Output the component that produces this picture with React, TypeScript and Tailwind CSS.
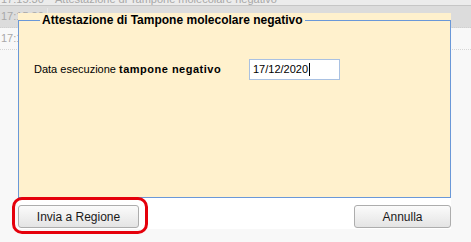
const rows = [
    { time: "17:15:30", text: "Attestazione di Tampone molecolare negativo" },
    { time: "17:15:30", text: "" },
    { time: "17:14:58", text: "" },
];

const Button = ({ label, className }: { label: string; className: string }) => (
    <button className={`h-[23px] rounded-[3px] border border-[#adadad] bg-linear-to-b from-[#fbfbfb] to-[#e4e4e4] text-[12px] text-[#1a1a1a] ${className}`}>
        {label}
    </button>
);

const App = () => {
    return (
        <div className="relative w-[471px] h-[242px] overflow-hidden bg-[#f8f8f8] font-['Liberation_Sans',Arial,sans-serif]">
            {/* background list */}
            <div className="flex flex-col text-[11px] text-[#a8a8a8]">
                <div className="h-[5px] overflow-hidden bg-[#ececec]">
                    <div className="flex -mt-[7px] leading-[13px]">
                        <span className="w-[48px] pl-[1px]">{rows[0].time}</span>
                        <span className="pl-[7px]">{rows[0].text}</span>
                    </div>
                </div>
                <div className="h-px bg-[#c6c6c6]"></div>
                <div className="flex items-center h-[22px] bg-[#dcdcdc] border-b border-dotted border-[#d0d0d0]">
                    <span className="w-[48px] pl-[1px] border-r border-[#e8e8e8]">{rows[1].time}</span>
                    <span className="pl-[7px]">{rows[1].text}</span>
                </div>
                <div className="flex items-center h-[22px] border-b border-dotted border-[#d6d6d6]">
                    <span className="w-[48px] pl-[1px]">{rows[2].time}</span>
                    <span className="pl-[7px]">{rows[2].text}</span>
                </div>
            </div>

            {/* dialog window */}
            <div className="absolute left-[18px] top-[13px] w-[433px] h-[216px] bg-white flex flex-col">
                <div className="h-[185px] bg-[#fff1cd]">
                    <fieldset className="h-[185px] border border-[#6a98d8] pl-[15px]">
                        <legend className="ml-[6px] px-[2px] h-[14px] leading-[14px] text-[12px] font-bold text-black">
                            Attestazione di Tampone molecolare negativo
                        </legend>
                        <div className="flex items-center mt-[32px]">
                            <span className="w-[215px] text-[11px] text-black">
                                Data esecuzione <b className="font-bold tracking-[0.5px]">tampone negativo</b>
                            </span>
                            <div className="flex items-center w-[91px] h-[21px] border border-[#a9c1e2] bg-white pl-[3px] text-[11px] text-black">
                                17/12/2020
                                <span className="w-px h-[13px] bg-black ml-[1px]"></span>
                            </div>
                        </div>
                    </fieldset>
                </div>
                <div className="flex justify-between pt-[7px]">
                    <Button label="Invia a Regione" className="w-[121px]" />
                    <Button label="Annulla" className="w-[97px]" />
                </div>
            </div>

            {/* highlight */}
            <div className="absolute left-[12px] top-[197px] w-[136px] h-[37px] rounded-[10px] border-[3px] border-[#e5000b]"></div>
        </div>
    );
};

export default App;
